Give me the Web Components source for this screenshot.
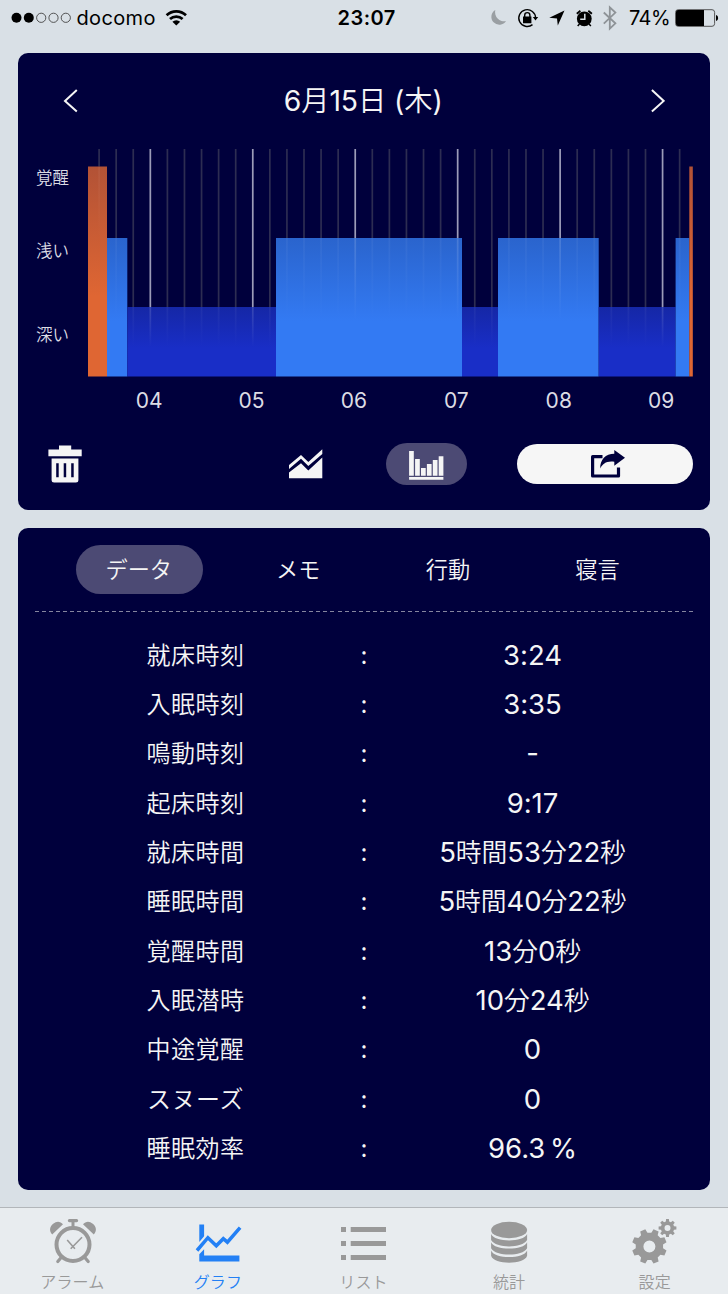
<!DOCTYPE html>
<html lang="ja">
<head>
<meta charset="utf-8">
<title>睡眠グラフ</title>
<style>
html,body{margin:0;padding:0}
body{width:728px;height:1294px;overflow:hidden;background:#d9e0e6;font-family:Inter,"Noto Sans CJK JP",sans-serif}
</style>
</head>
<body>
<sleep-app></sleep-app>
<script>
const define = (name, html, setup) => customElements.define(name, class extends HTMLElement {
  constructor() {
    super();
    const t = document.createElement('template');
    t.innerHTML = html;
    this.attachShadow({mode: 'open'}).appendChild(t.content.cloneNode(true));
  }
  connectedCallback() { if (setup) setup(this, this.shadowRoot); }
});

/* ---------- status bar ---------- */
define('status-bar', `
<style>
:host{display:flex;height:37px;align-items:center;box-sizing:border-box;color:#000;line-height:37px;white-space:nowrap}
svg{display:block;flex:none}
.carrier{width:86px;font-size:20px;letter-spacing:.35px;margin-left:4.5px}
.time{width:62px;font-size:20px;font-weight:600;letter-spacing:.5px;margin-left:150px}
.pct{width:43px;font-size:20px;letter-spacing:-.6px;margin-left:7px}
</style>
<svg width="72" height="37" viewBox="0 0 72 37"><g fill="#000"><circle cx="16.5" cy="17.8" r="5"/><circle cx="28.8" cy="17.8" r="5"/></g><g fill="none" stroke="#444" stroke-width=".9"><circle cx="41.2" cy="17.8" r="4.6"/><circle cx="53.5" cy="17.8" r="4.6"/><circle cx="65.8" cy="17.8" r="4.6"/></g></svg>
<span class="carrier">docomo</span>
<svg width="25" height="37" viewBox="163 0 25 37"><g fill="none" stroke="#000" stroke-width="2.7"><path d="M166.6 15.2a14 14 0 0 1 19.4 0"/><path d="M170 19.1a9.2 9.2 0 0 1 12.6 0"/></g><path d="M172.4 21.7a5.8 5.8 0 0 1 7.8 0L176.3 25.4Z"/></svg>
<span class="time">23:07</span>
<svg width="142" height="37" viewBox="480 0 142 37" style="margin-left:80.5px">
<path d="M495.300 9.900a8 8 0 1 0 10.800 11.200a9.200 9.200 0 0 1-10.800-11.200Z" fill="#9a9fa3"/>
<g fill="none" stroke="#000" stroke-width="1.4"><path d="M535.6 18A8.4 8.4 0 1 0 532.5 24.6"/><path d="M524.7 17v-1.8a2.6 2.6 0 0 1 5.2 0V17"/></g>
<path d="M532.8 17h5.4l-2.7 3.5ZM523 16.6h8.4v6.6H523Z"/>
<path d="M564.5 10.5 557.8 25.6 557 18.4 549.3 17.7Z"/>
<circle cx="584.3" cy="18.800" r="7.400"/><path d="M576.800 13.800 580.400 10.800M588.300 10.800 591.900 13.800" stroke="#000" stroke-width="1.800"/><path d="M579.5 24 577.7 26M589 24 590.9 26" stroke="#000" stroke-width="1.500"/><path d="M584.800 13.800v5.400h-4.600" fill="none" stroke="#d9e0e6" stroke-width="1.5"/>
<path d="M603.8 12.5 615.4 23.3 609.8 28.6V7.3L615.4 12.6 603.8 23.6" fill="none" stroke="#8e9397" stroke-width="1.800"/>
</svg>
<span class="pct">74%</span>
<svg width="46" height="37" viewBox="674 0 46 37" style="margin-left:2px"><rect x="675.6" y="9.7" width="39" height="16.6" rx="2.6" fill="none" stroke="#555" stroke-width="1"/><path d="M676 12a2 2 0 0 1 2-2H704V26H678a2 2 0 0 1-2-2Z"/><path d="M716 15c1.4.3 2.1 1.5 2.1 3s-.7 2.700-2.100 3Z"/></svg>
`);

/* ---------- card ---------- */
define('night-card', `
<style>:host{display:block;background:#00003c;border-radius:10px;box-sizing:border-box;color:#f5f5f5}</style><slot></slot>`);

/* ---------- date header ---------- */
define('date-nav', `
<style>
:host{display:flex;height:96px;justify-content:space-between;align-items:center;padding:0 45px 0 45px}
h1{margin:0;font-size:28.300px;font-weight:400;line-height:96px;letter-spacing:-.1px;padding-right:1.500px}
h1 ::slotted(*){font-weight:350}
svg{display:block}
</style>
<svg width="15" height="24" viewBox="0 0 15 24"><path d="M13.800 1 2 11.900 13.800 22.600" fill="none" stroke="#f5f5f5" stroke-width="2"/></svg>
<h1><slot></slot></h1>
<svg width="15" height="24" viewBox="0 0 15 24"><path d="M1.900 1 13.700 11.900 1.900 22.600" fill="none" stroke="#f5f5f5" stroke-width="2"/></svg>
`);

/* ---------- chart ---------- */
define('sleep-chart', `
<style>
:host{display:grid;grid-template-columns:70px 604px;grid-template-rows:228px 48px;height:276px}
.levels{display:grid;grid-template-rows:58px 90px 79px;font-size:16.500px;font-weight:350;color:#dcdce4}
.levels span{padding-left:18px;line-height:59px}
.levels span:nth-child(2){line-height:89px}
.levels span:nth-child(3){line-height:76px}
svg{display:block}
.hours{grid-column:2;display:grid;grid-template-columns:repeat(6,102.400px);margin-left:10px;width:615px;font-size:21px;letter-spacing:.1px;line-height:47px;text-align:center;color:#dcdce4}
</style>
<div class="levels"><span>覚醒</span><span>浅い</span><span>深い</span></div>
<svg width="604" height="228" viewBox="88 149 604 228" style="overflow:visible">
<defs>
<linearGradient id="o" x2="0" y2="1"><stop stop-color="#b25236"/><stop offset=".62" stop-color="#df6633"/><stop offset="1" stop-color="#df6633"/></linearGradient>
<linearGradient id="l" x2="0" y2="1"><stop stop-color="#2a64cd"/><stop offset=".6" stop-color="#337af3"/><stop offset="1" stop-color="#337af3"/></linearGradient>
<linearGradient id="d" x2="0" y2="1"><stop stop-color="#1527a6"/><stop offset=".6" stop-color="#192ec7"/><stop offset="1" stop-color="#192ec7"/></linearGradient>
<linearGradient id="f" x2="0" y2="1"><stop stop-color="#fff"/><stop offset="1" stop-color="#fff" stop-opacity="0"/></linearGradient>
</defs>
<g class="grid"></g><g class="bars"></g><g class="over"></g>
</svg>
<div class="hours"><span>04</span><span>05</span><span>06</span><span>07</span><span>08</span><span>09</span></div>
`, (el, root) => {
  const bars = [[88,107,166.5,'o'],[107,127.3,238,'l'],[127.3,276,307,'d'],[276,462,238,'l'],[462,498,307,'d'],[498,598.7,238,'l'],[598.7,675.6,307,'d'],[675.6,689.3,238,'l'],[689.3,692.8,166.5,'o']];
  let grid = '', over = '';
  for (let i = 0; i < 35; i++) {
    const x = 99.1 + i * 17.075, major = i % 6 === 3;
    const bar = bars.find(b => x >= b[0] && x < b[1]);
    grid += `<rect x="${x - .85}" y="149" width="1.7" height="${bar[2] - 149}" fill="${major ? '#9c9cb8' : '#2d2d52'}"/>`;
    const end = bar[3] === 'd' ? 347 : bar[3] === 'l' ? 320 : 240;
    over += `<rect x="${x - .85}" y="${bar[2]}" width="1.7" height="${end - bar[2]}" fill="url(#f)" opacity="${major ? .15 : .05}"/>`;
  }
  root.querySelector('.grid').innerHTML = grid;
  root.querySelector('.bars').innerHTML = bars.map(b => `<rect x="${b[0]}" y="${b[2]}" width="${b[1] - b[0]}" height="${376.5 - b[2]}" fill="url(#${b[3]})"/>`).join('');
  root.querySelector('.over').innerHTML = over;
});

/* ---------- chart tools ---------- */
define('chart-tools', `
<style>
:host{display:flex;height:42px;align-items:center;margin-top:18px;padding-left:30px}
svg{display:block}
.on{display:flex;align-items:center;justify-content:center;width:80.500px;height:42px;border-radius:21px;background:#4c4a74;margin-left:63px}
.share{display:flex;align-items:center;justify-content:center;width:176px;height:40.500px;border-radius:21px;background:#f6f6f6;margin-left:50.500px}
</style>
<svg width="34" height="42" viewBox="48 443 34 42" fill="#f5f5f5"><path d="M59 445.500H71.200V449.400H81.700V456.300H48.400V449.400H59ZM51.600 458.500H78.400V480a2.500 2.500 0 0 1-2.500 2.500H54.100a2.500 2.500 0 0 1-2.500-2.500ZM56.200 463.200V477.300H58.700V463.200ZM63.700 463.200V477.300H66.200V463.200ZM71.200 463.200V477.300H73.700V463.200Z" fill-rule="evenodd"/></svg>
<svg style="margin-left:206px" width="35" height="42" viewBox="288 443 35 42" fill="#f5f5f5"><path d="M289 465 301 455 308.300 462 322.300 449.200V454L308.300 466 301 458.700 289 469ZM289 472.600 301 463.300 308.300 470.600 322.300 457.500V478.200H289Z"/></svg>
<div class="on"><svg width="36" height="42" viewBox="408.200 443 36 42" fill="#f5f5f5"><path d="M409.300 451H414V475.700H409.300ZM415.300 459H420V475.700H415.300ZM421.200 468H425.900V475.700H421.200ZM427.100 464H431.800V475.700H427.100ZM433 460H437.700V475.700H433ZM438.900 456.300H443.600V475.700H438.900ZM409.300 476.900H443.600V479.700H409.300Z"/></svg></div>
<div class="share"><svg width="42" height="40" viewBox="584 444 42 40"><path d="M602.500 456.700H592.600V476H618.500V467.500" fill="none" stroke="#00003c" stroke-width="3.200" stroke-linejoin="round"/><path d="M614.300 450 625 457.700 614.300 465.800V461.700C607 460.500 602.500 463.500 600.200 468.500C600 459.500 605.500 454 614.300 453.800Z" fill="#00003c"/></svg></div>
`);

/* ---------- detail tabs ---------- */
define('detail-tabs', `
<style>
:host{display:grid;grid-template-columns:168.500px 149.500px 150px 149px;height:49px;padding:17px 37px 0;align-items:center;justify-items:center;font-size:22.200px;font-weight:350;line-height:49px}
.on{width:126px;padding-right:1px;height:49px;border-radius:25px;background:#4c4a74;text-align:center}
</style>
<span class="on">データ</span><span>メモ</span><span>行動</span><span>寝言</span>
`);
define('dash-line', `
<style>:host{display:block;height:1px;margin:17px 17px 0;background:repeating-linear-gradient(90deg,#85859f 0 4px,transparent 4px 7.035px)}</style>`);

/* ---------- data rows ---------- */
define('data-row', `
<style>
:host{display:grid;grid-template-columns:139px 198px 229px;height:49.350px;line-height:49.400px;text-align:center;padding-left:108px}
.k{font-size:24px;font-weight:350;letter-spacing:.5px}
.c{font-size:24px;line-height:49px}
.v{font-size:27.500px;font-weight:400;line-height:48px;white-space:nowrap;letter-spacing:-.05px;word-spacing:-3px;margin-left:-45px;margin-right:45px}
.v i{font-style:normal;font-weight:350;font-size:25.800px}
</style>
<span class="k"></span><span class="c">:</span><span class="v"></span>
`, (el, root) => {
  root.querySelector('.k').textContent = el.getAttribute('label');
  root.querySelector('.v').innerHTML = el.getAttribute('value').replace(/[時間分秒]+/g, '<i>$&</i>');
});

/* ---------- tab bar ---------- */
const gear = (cx, cy, ro, rr, hole, n, off) => {
  const p = [], s = Math.PI * 2 / n;
  for (let i = 0; i < n; i++) for (const [f, r] of [[-.32, rr], [-.2, ro], [.2, ro], [.32, rr]]) {
    const a = off + (i + f) * s;
    p.push((cx + r * Math.cos(a)).toFixed(2) + ' ' + (cy + r * Math.sin(a)).toFixed(2));
  }
  return `<path fill-rule="evenodd" d="M${p.join('L')}ZM${cx - hole} ${cy}a${hole} ${hole} 0 1 0 ${hole * 2} 0a${hole} ${hole} 0 1 0 ${-hole * 2} 0Z"/>`;
};
const tabIcons = {
  alarm: `<g fill="none" stroke="currentColor"><circle cx="72.800" cy="1244.500" r="16.500" stroke-width="4"/><path stroke-width="3.200" stroke-linecap="round" d="M69.200 1220.600H76.400M61 1257.500 57.600 1261.500M84.600 1257.500 88 1261.500"/><path stroke-width="3" d="M72.800 1220V1227"/><path stroke-width="1.600" d="M67 1240 74.700 1248.700M81.800 1237.200 70.500 1248.700"/></g><path d="M52 1234.400C48.500 1230.500 49.700 1226.500 53 1223.700C56.500 1220.700 60 1221 62.800 1224.300ZM93.600 1234.400C97.100 1230.500 95.900 1226.500 92.600 1223.700C89.100 1220.700 85.600 1221 82.800 1224.300Z"/>`,
  graph: `<path d="M199.700 1224.500H204.500V1236.200L199.700 1242ZM199.700 1254.300 204.500 1249.200V1255.600H239.800V1261.500H199.700Z"/><path d="M197.400 1250.500 208.300 1237.700 216.700 1245.800 223.700 1238.700 227.800 1242.200 240.500 1227.700" fill="none" stroke="currentColor" stroke-width="3.500"/>`,
  list: `<path d="M341 1227h5v5h-5ZM350.700 1227H386v5H350.700ZM341 1241h5v5h-5ZM350.700 1241H386v5H350.700ZM341 1255h5v5h-5ZM350.700 1255H386v5H350.700Z"/>`,
  data: `<ellipse cx="508.700" cy="1230" rx="18" ry="8.300"/><path d="M490.700 1234C494 1242.500 523.400 1242.500 526.700 1234V1240C522 1248.500 495.400 1248.500 490.700 1240ZM490.700 1242.200C494 1250.700 523.400 1250.700 526.700 1242.200V1248.200C522 1256.700 495.400 1256.700 490.700 1248.200ZM490.700 1250.400C494 1259.200 523.400 1259.200 526.700 1250.400V1255.700C524 1265 493.400 1265 490.700 1255.700Z"/>`,
  gears: gear(649.600, 1246.400, 17.600, 13.800, 6, 8, Math.PI / 8) + gear(667.700, 1228, 9, 6.700, 3, 8, 0)
};
define('tab-item', `
<style>
:host{display:block;color:#999;text-align:center;font-size:16px;font-weight:350;letter-spacing:.1px}
:host([active]){color:#2380f5}
svg{display:block;margin:0 auto;fill:currentColor}
div{height:24px;line-height:24px;margin-top:1.500px;margin-left:-1px}
</style>
<svg width="50" height="60"></svg><div><slot></slot></div>
`, (el, root) => {
  const s = root.querySelector('svg');
  s.setAttribute('viewBox', `${+el.getAttribute('mid') - 25} 1208 50 60`);
  s.innerHTML = tabIcons[el.getAttribute('icon')];
});
define('tab-bar', `
<style>:host{display:grid;grid-template-columns:repeat(5,1fr);height:87px;box-sizing:border-box;border-top:1px solid #b2b6ba;background:#e8ecef}</style><slot></slot>`);

/* ---------- page ---------- */
define('sleep-app', `
<style>
:host{display:flex;flex-direction:column;width:728px;height:1294px;background:#d9e0e6}
main{flex:1;padding:16px 18px 0}
.top{height:457px}
.bottom{height:662px;margin-top:18px}
.rows{padding-top:18.500px}
</style>
<status-bar></status-bar>
<main>
<night-card class="top"><date-nav>6<span>月</span>15<span>日</span> (<span>木</span>)</date-nav><sleep-chart></sleep-chart><chart-tools></chart-tools></night-card>
<night-card class="bottom"><detail-tabs></detail-tabs><dash-line></dash-line>
<div class="rows">
<data-row label="就床時刻" value="3:24"></data-row>
<data-row label="入眠時刻" value="3:35"></data-row>
<data-row label="鳴動時刻" value="-"></data-row>
<data-row label="起床時刻" value="9:17"></data-row>
<data-row label="就床時間" value="5時間53分22秒"></data-row>
<data-row label="睡眠時間" value="5時間40分22秒"></data-row>
<data-row label="覚醒時間" value="13分0秒"></data-row>
<data-row label="入眠潜時" value="10分24秒"></data-row>
<data-row label="中途覚醒" value="0"></data-row>
<data-row label="スヌーズ" value="0"></data-row>
<data-row label="睡眠効率" value="96.3 %"></data-row>
</div></night-card>
</main>
<tab-bar>
<tab-item icon="alarm" mid="72.800">アラーム</tab-item>
<tab-item icon="graph" mid="218.400" active>グラフ</tab-item>
<tab-item icon="list" mid="364">リスト</tab-item>
<tab-item icon="data" mid="509.600">統計</tab-item>
<tab-item icon="gears" mid="655.200">設定</tab-item>
</tab-bar>
`);
</script>
</body>
</html>
